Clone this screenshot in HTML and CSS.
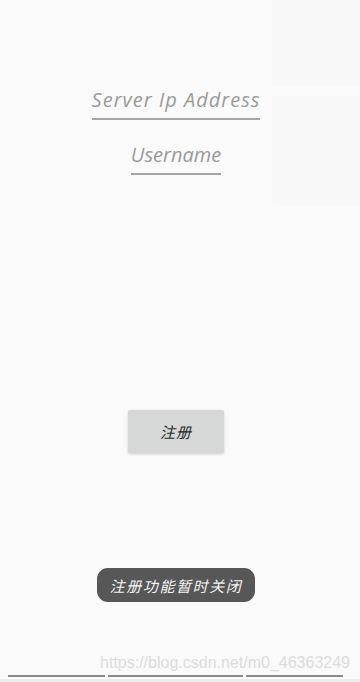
FILE: index.html
```html
<!DOCTYPE html>
<html lang="zh">
<head>
<meta charset="utf-8">
<link rel="stylesheet" href="styles.css">
</head>
<body>
<div class="screen">
  <div class="ghost ghost-top"></div>
  <div class="ghost ghost-mid"></div>
  <div class="form">
    <div class="field field-ip">Server Ip Address</div>
    <div class="field field-user">Username</div>
  </div>
  <div class="btn-wrap">
    <div class="btn">注册</div>
  </div>
  <div class="toast-wrap">
    <div class="toast">注册功能暂时关闭</div>
  </div>
  <div class="bottom">
    <div class="watermark">https://blog.csdn.net/m0_46363249</div>
    <div class="lines">
      <span class="ln ln1"></span>
      <span class="ln ln2"></span>
      <span class="ln ln3"></span>
    </div>
  </div>
</div>
</body>
</html>
```
FILE: styles.css
```css
html, body {
  margin: 0;
  padding: 0;
  background: #fafafa;
}
.screen {
  position: relative;
  width: 360px;
  height: 682px;
  box-sizing: border-box;
  padding-right: 8px;
  overflow: hidden;
  background: #fafafa;
  font-family: "Open Sans", "Noto Sans CJK SC", sans-serif;
  display: flex;
  flex-direction: column;
  align-items: center;
}
.ghost {
  position: absolute;
  left: 273px;
  width: 87px;
  background: #f8f8f8;
  box-shadow: 0 0 2px rgba(0,0,0,0.02);
}
.ghost-top { top: 0; height: 86px; }
.ghost-mid { top: 97px; height: 108px; }
.form {
  position: relative;
  margin-top: 86px;
  display: flex;
  flex-direction: column;
  align-items: center;
  gap: 21px;
}
.field {
  font-style: italic;
  font-size: 20px;
  line-height: 28px;
  color: #9a9a9a;
  border-bottom: 2px solid #a5a5a5;
  padding-bottom: 4px;
}
.field-ip { letter-spacing: 1px; }
.field-user { letter-spacing: 0; }
.btn-wrap {
  margin-top: 235px;
}
.btn {
  width: 96px;
  height: 43px;
  background: #d6d7d7;
  border-radius: 2px;
  box-shadow: 0 1px 3px rgba(0,0,0,0.18);
  display: flex;
  align-items: center;
  justify-content: center;
  font-size: 15px;
  font-style: italic;
  color: #2a2a2a;
  letter-spacing: 1px;
}
.toast-wrap {
  margin-top: 115px;
}
.toast {
  height: 34px;
  padding: 0 13px;
  border-radius: 11px;
  background: #575757;
  color: #f4f4f4;
  font-size: 15px;
  font-style: italic;
  letter-spacing: 1.6px;
  display: flex;
  align-items: center;
}
.bottom {
  margin-top: auto;
  margin-right: -8px;
  width: 360px;
  position: relative;
  border-bottom: 3px solid #ececec;
}
.watermark {
  text-align: right;
  padding-right: 10px;
  font-family: "Liberation Sans", sans-serif;
  font-size: 16px;
  line-height: 20px;
  color: #dcdcdc;
}
.lines {
  display: flex;
  padding: 2px 0 2px 8px;
  gap: 3px;
}
.ln {
  height: 2px;
  background: #8a8a8a;
  display: block;
}
.ln1 { width: 97px; }
.ln2 { width: 135px; }
.ln3 { width: 97px; }
```
